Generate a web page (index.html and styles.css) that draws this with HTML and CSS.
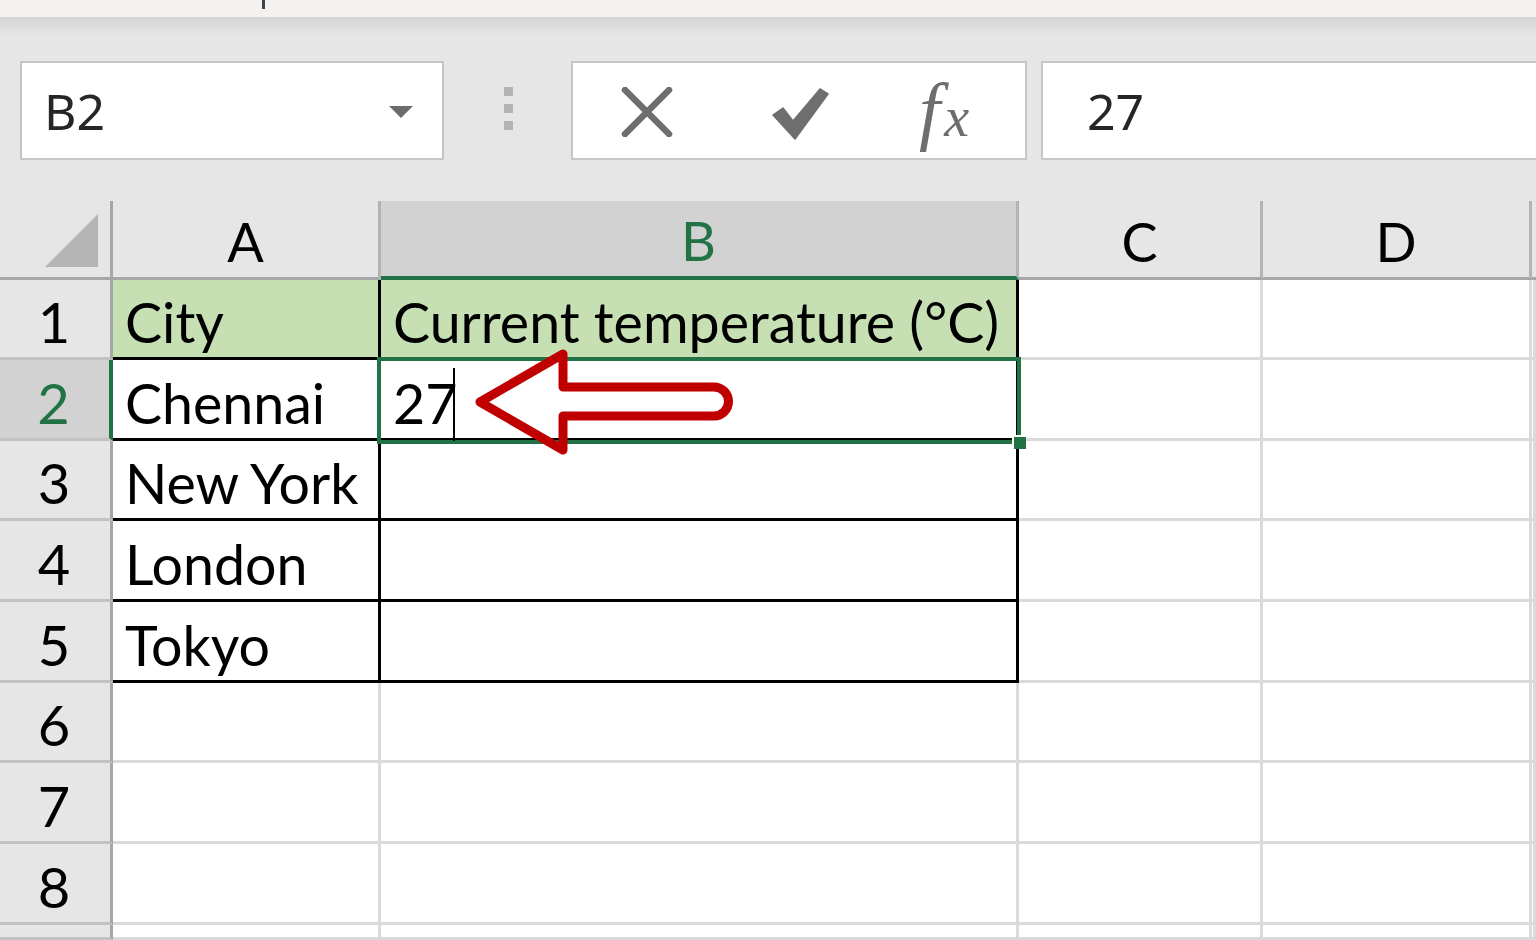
FILE: index.html
```html
<!DOCTYPE html>
<html lang="en">
<head>
    <meta charset="UTF-8">
    <title>Excel - Enter value</title>
    <link rel="stylesheet" href="styles.css">
</head>
<body>

    <div class="top-edge"><span class="tick"></span></div>

    <div class="formula-bar">
        <div class="name-box">
            <span>B2</span>
            <svg class="caret" width="26" height="14" viewBox="0 0 26 14"><path d="M1 1 L25 1 L13 13 Z" fill="#6b6b6b"/></svg>
        </div>
        <div class="grip"><i></i><i></i><i></i></div>
        <div class="fx-buttons">
            <svg class="icon-cancel" width="56" height="50" viewBox="0 0 56 50">
                <path d="M6 3 L50 47 M50 3 L6 47" stroke="#6e6e6e" stroke-width="6.5" stroke-linecap="round" fill="none"/>
            </svg>
            <svg class="icon-enter" width="60" height="52" viewBox="0 0 60 52">
                <path d="M2 27 L12 20 L22 33 L49 1 L57 6 L24 51 Z" fill="#6e6e6e" stroke="#6e6e6e" stroke-width="1.5" stroke-linejoin="round"/>
            </svg>
            <span class="fx"><i class="f">f</i><i class="x">x</i></span>
        </div>
        <div class="formula-input"><span>27</span></div>
    </div>

    <div class="sheet">
        <!-- header row -->
        <div class="corner"><span class="corner-tri"></span></div>
        <div class="col-head">A</div>
        <div class="col-head selected">B</div>
        <div class="col-head">C</div>
        <div class="col-head">D</div>
        <div class="col-head last"></div>

        <!-- row 1 -->
        <div class="row-head">1</div>
        <div class="cell data fill">City</div>
        <div class="cell data fill">Current temperature (°C)</div>
        <div class="cell"></div>
        <div class="cell"></div>
        <div class="cell"></div>

        <!-- row 2 -->
        <div class="row-head selected">2</div>
        <div class="cell data">Chennai</div>
        <div class="cell data">27</div>
        <div class="cell"></div>
        <div class="cell"></div>
        <div class="cell"></div>

        <!-- row 3 -->
        <div class="row-head">3</div>
        <div class="cell data">New York</div>
        <div class="cell data"></div>
        <div class="cell"></div>
        <div class="cell"></div>
        <div class="cell"></div>

        <!-- row 4 -->
        <div class="row-head">4</div>
        <div class="cell data">London</div>
        <div class="cell data"></div>
        <div class="cell"></div>
        <div class="cell"></div>
        <div class="cell"></div>

        <!-- row 5 -->
        <div class="row-head">5</div>
        <div class="cell data">Tokyo</div>
        <div class="cell data"></div>
        <div class="cell"></div>
        <div class="cell"></div>
        <div class="cell"></div>

        <!-- rows 6-9 -->
        <div class="row-head">6</div>
        <div class="cell"></div><div class="cell"></div><div class="cell"></div><div class="cell"></div><div class="cell"></div>
        <div class="row-head">7</div>
        <div class="cell"></div><div class="cell"></div><div class="cell"></div><div class="cell"></div><div class="cell"></div>
        <div class="row-head">8</div>
        <div class="cell"></div><div class="cell"></div><div class="cell"></div><div class="cell"></div><div class="cell"></div>
        <div class="row-head"></div>
        <div class="cell"></div><div class="cell"></div><div class="cell"></div><div class="cell"></div><div class="cell"></div>

        <!-- active cell outline and caret -->
        <div class="selection"><span class="handle"></span></div>
        <span class="text-cursor"></span>
    </div>

    <svg class="callout" width="1536" height="940" viewBox="0 0 1536 940">
        <path d="M480 402 L563 354 L563 387 L714 387 A14.5 14.5 0 0 1 714 416 L563 416 L563 450 Z"
              fill="none" stroke="#c00000" stroke-width="9" stroke-linejoin="round"/>
    </svg>

</body>
</html>
```

FILE: styles.css
```css
body {
    margin: 0;
    background-color: #e6e6e6;
    font-family: 'Noto Sans', sans-serif;
    width: 1536px;
    height: 940px;
    overflow: hidden;
    position: relative;
}
.top-edge {
    height: 17px;
    background-color: #f3f2f1;
    position: relative;
}
.tick {
    position: absolute;
    left: 262px;
    top: 0;
    width: 3px;
    height: 9px;
    background-color: #444;
}
.formula-bar {
    height: 184px;
    box-sizing: border-box;
    padding: 44px 0 0 20px;
    display: flex;
    align-items: flex-start;
    background: linear-gradient(#d4d4d4, #e6e6e6 20px);
}
.name-box,
.fx-buttons,
.formula-input {
    height: 99px;
    box-sizing: border-box;
    background-color: #fff;
    border: 2px solid #c6c6c6;
    display: flex;
    align-items: center;
}
.name-box {
    width: 424px;
    padding: 0 28px 0 22px;
    justify-content: space-between;
    font-size: 50px;
    color: #262626;
}
.caret {
    margin-top: 2px;
}
.grip {
    width: 9px;
    margin: 26px 58px 0 60px;
    display: flex;
    flex-direction: column;
    gap: 8px;
}
.grip i {
    width: 9px;
    height: 9px;
    background-color: #b3b3b3;
}
.fx-buttons {
    width: 456px;
    padding: 0 0 0 46px;
    margin-right: 14px;
}
.icon-cancel {
    margin-top: 2px;
}
.icon-enter {
    margin: 6px 0 0 96px;
}
.fx {
    margin: 0 0 0 88px;
    font-family: 'Liberation Serif', serif;
    color: #6e6e6e;
    white-space: nowrap;
}
.fx .f {
    font-size: 76px;
}
.fx .x {
    font-size: 56px;
    margin-left: 4px;
}
.formula-input {
    flex: 1;
    margin-right: -10px;
    padding-left: 44px;
    font-size: 50px;
    color: #262626;
}

/* worksheet */
.sheet {
    position: relative;
    height: 739px;
    display: grid;
    grid-template-columns: 113px 268px 638px 244px 269px 1fr;
    grid-template-rows: 79px 80px 81px 80px 81px 81px 80px 81px 81px 1fr;
    font-family: 'Lato', sans-serif;
    font-size: 55.5px;
    color: #000;
}
.corner,
.col-head,
.row-head,
.cell {
    box-sizing: border-box;
    border-right: 3px solid #dadada;
    border-bottom: 3px solid #dadada;
}
.corner {
    border-right-color: #a6a6a6;
    border-bottom-color: #a6a6a6;
    position: relative;
}
.corner-tri {
    position: absolute;
    right: 12px;
    bottom: 10px;
    width: 0;
    height: 0;
    border-left: 53px solid transparent;
    border-bottom: 53px solid #b4b4b4;
}
.col-head {
    border-right-color: #b4b4b4;
    border-bottom-color: #a6a6a6;
    display: flex;
    align-items: center;
    justify-content: center;
    padding-top: 4px;
    font-size: 54px;
}
.col-head.last {
    border-right: none;
}
.col-head.selected {
    background-color: #d2d2d2;
    border-bottom: 4px solid #217346;
    color: #217346;
}
.row-head {
    border-right-color: #a6a6a6;
    border-bottom-color: #c2c2c2;
    display: flex;
    align-items: center;
    justify-content: center;
    padding: 6px 2px 0 0;
    font-size: 56px;
}
.row-head.selected {
    background-color: #d2d2d2;
    color: #217346;
    border-right: 4px solid #217346;
}
.cell {
    background-color: #fff;
}
.cell.data {
    border-right-color: #000;
    border-bottom-color: #000;
    display: flex;
    align-items: flex-end;
    padding: 0 0 2px 12px;
    white-space: nowrap;
}
.cell.fill {
    background-color: #c6e0b4;
}
.selection {
    position: absolute;
    left: 377px;
    top: 156px;
    width: 644px;
    height: 87px;
    box-sizing: border-box;
    border: 4px solid #217346;
}
.handle {
    position: absolute;
    right: -9px;
    bottom: -9px;
    width: 12px;
    height: 12px;
    background-color: #217346;
    border-top: 2px solid #fff;
    border-left: 2px solid #fff;
}
.text-cursor {
    position: absolute;
    left: 453px;
    top: 167px;
    width: 2px;
    height: 73px;
    background-color: #000;
}
.callout {
    position: absolute;
    left: 0;
    top: 0;
    pointer-events: none;
}
```
